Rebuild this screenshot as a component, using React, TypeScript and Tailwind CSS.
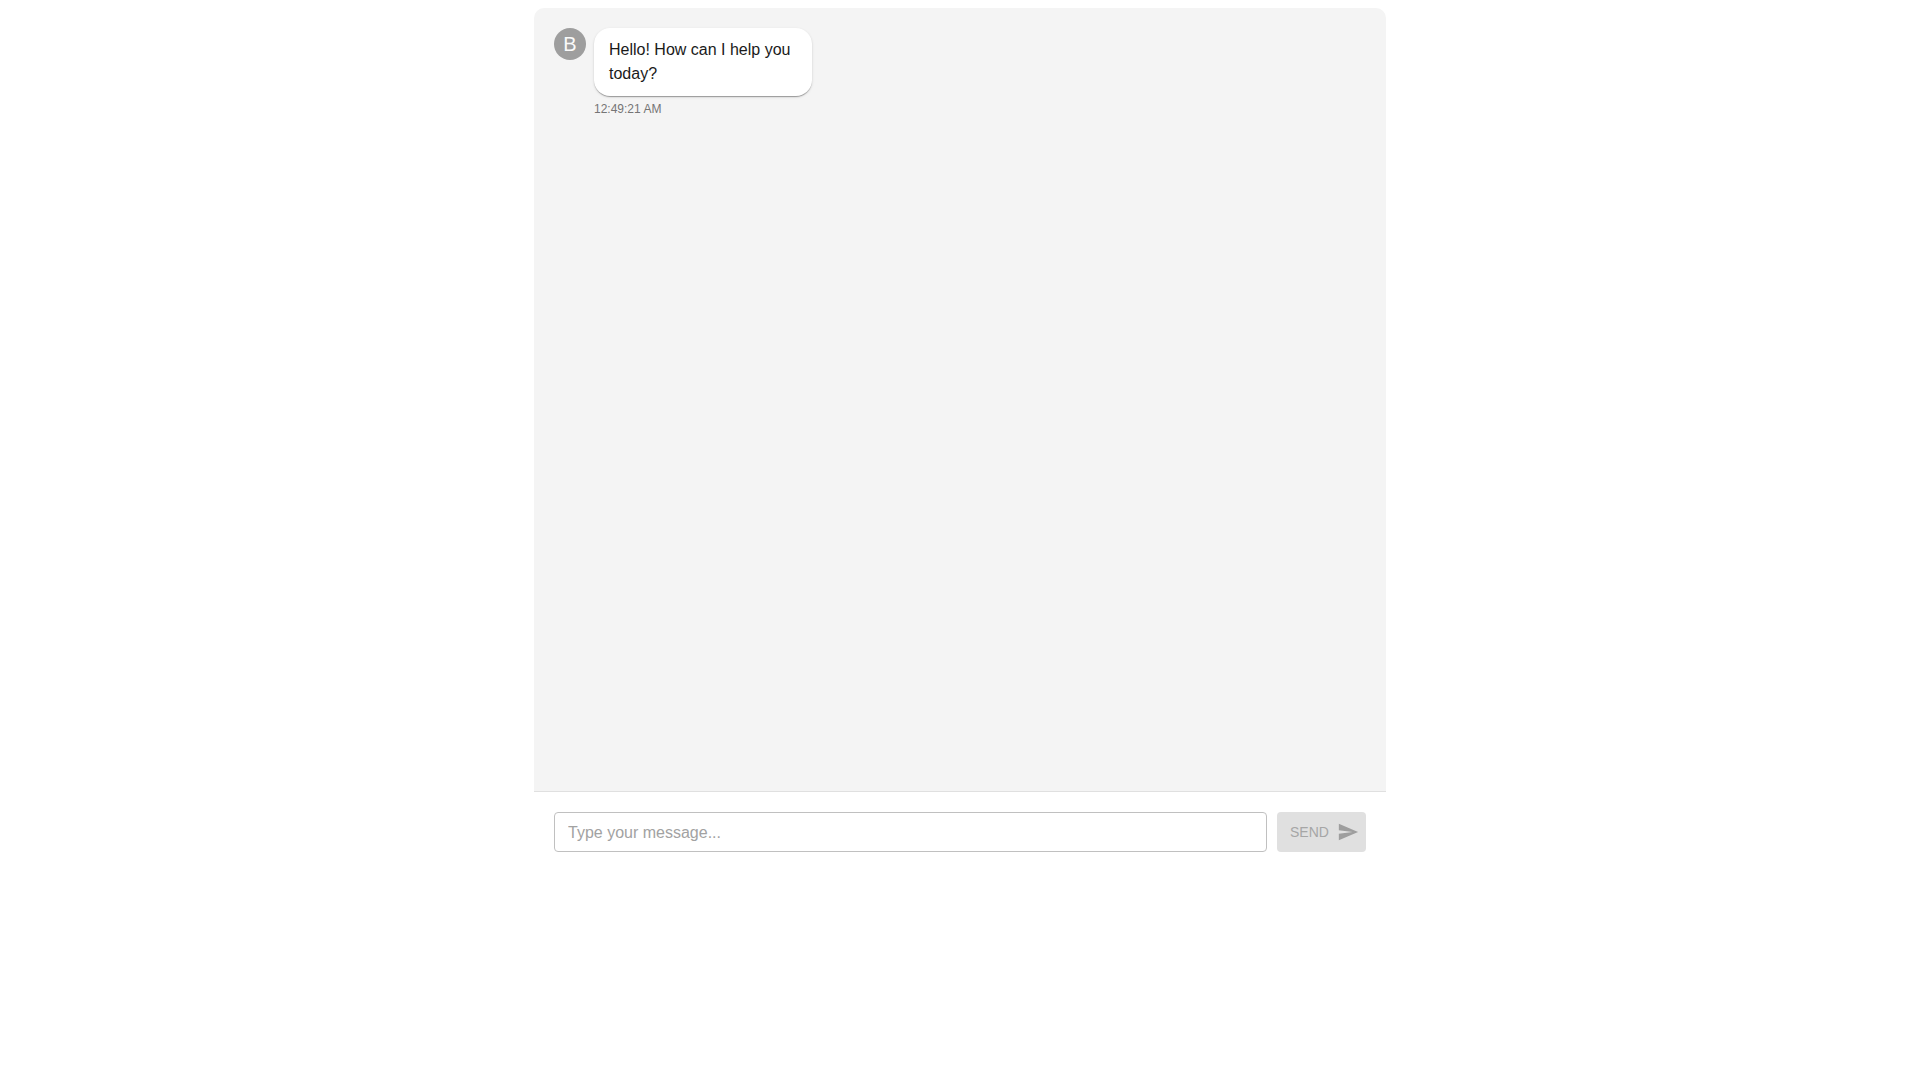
import React, { useState } from 'react';

interface Message {
  id: number;
  sender: 'bot' | 'user';
  text: string;
  time: string;
}

const INITIAL_MESSAGES: Message[] = [
  { id: 1, sender: 'bot', text: 'Hello! How can I help you today?', time: '12:49:21 AM' },
];

const SendIcon: React.FC = () => (
  <svg className="w-[22px] h-[22px] group-disabled:text-[#9e9e9e]" viewBox="0 0 24 24" fill="currentColor" aria-hidden="true">
    <path d="M2.01 21 23 12 2.01 3 2 10l15 2-15 2z" />
  </svg>
);

const MessageRow: React.FC<{ message: Message }> = ({ message }) => {
  const isUser = message.sender === 'user';

  return (
    <div className={isUser ? 'flex flex-row-reverse items-start gap-2' : 'flex items-start gap-2'}>
      <div className="w-8 h-8 shrink-0 rounded-full bg-[#9e9e9e] text-[#fafafa] text-xl leading-5 flex items-center justify-center">
        {isUser ? 'U' : 'B'}
      </div>
      <div>
        <p className="max-w-[218px] px-[15px] py-[10px] rounded-2xl bg-white text-base leading-6 text-[#1a1a1a] shadow-[0px_2px_1px_-1px_rgba(0,0,0,0.2),0px_1px_1px_0px_rgba(0,0,0,0.14),0px_1px_3px_0px_rgba(0,0,0,0.12)]">
          {message.text}
        </p>
        <time className="block mt-[3px] text-xs leading-5 text-[#757575]">{message.time}</time>
      </div>
    </div>
  );
};

const App: React.FC = () => {
  const [messages, setMessages] = useState<Message[]>(INITIAL_MESSAGES);
  const [draft, setDraft] = useState('');

  const handleSubmit = (e: React.FormEvent) => {
    e.preventDefault();
    if (!draft.trim()) return;
    setMessages(prev => [
      ...prev,
      { id: prev.length + 1, sender: 'user', text: draft, time: new Date().toLocaleTimeString() },
    ]);
    setDraft('');
  };

  return (
    <main className="max-w-[900px] mx-auto px-6 pt-2 font-['Liberation_Sans',Arial,sans-serif]">
      <div className="h-[80vh] flex flex-col rounded-[10px] overflow-hidden bg-white">
        <div className="flex-1 overflow-y-auto p-5 space-y-4 bg-[#f4f4f4]">
          {messages.map(m => (
            <MessageRow key={m.id} message={m} />
          ))}
        </div>
        <form onSubmit={handleSubmit} className="flex gap-[10px] p-5 border-t border-[#e0e0e0]">
          <input
            type="text"
            aria-label="Message"
            placeholder="Type your message..."
            value={draft}
            onChange={e => setDraft(e.target.value)}
            className="flex-1 min-w-0 h-10 px-[13px] pt-0.5 rounded border border-[#c0c0c0] text-base text-black/87 placeholder:text-[#a2a2a2] outline-none focus:border-[#1976d2]"
          />
          <button
            type="submit"
            disabled={!draft.trim()}
            className="group w-[89px] h-10 pl-[13px] pr-[7px] flex items-center justify-between rounded text-sm bg-[#1976d2] text-white disabled:bg-[#e0e0e0] disabled:text-[#a6a6a6]"
          >
            SEND
            <SendIcon />
          </button>
        </form>
      </div>
    </main>
  );
};

export default App;
